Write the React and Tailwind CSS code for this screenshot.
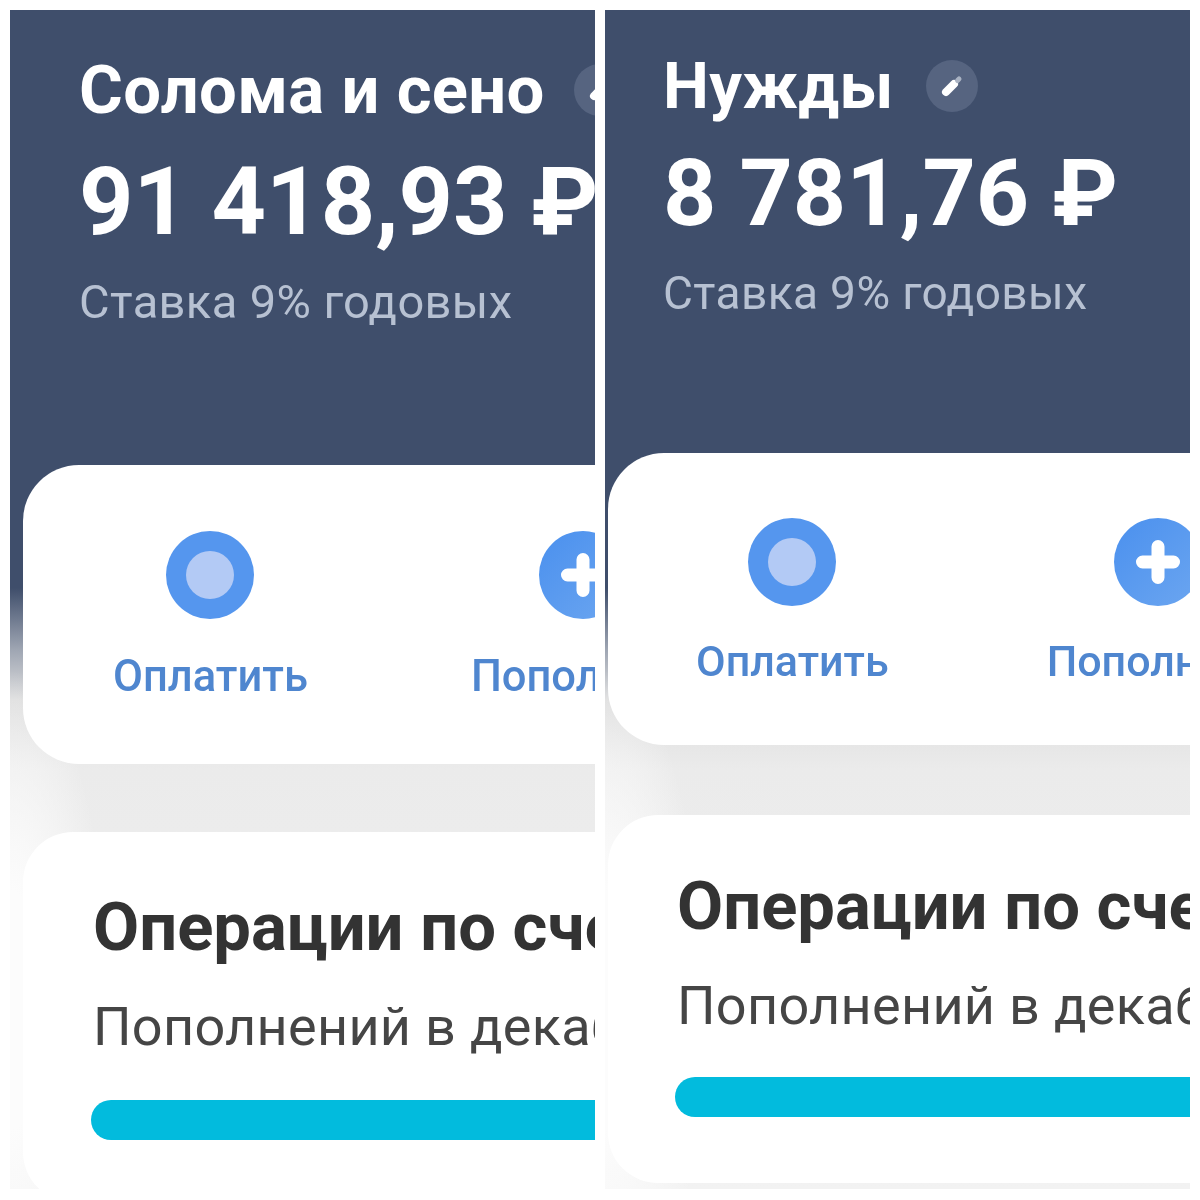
const roboto = { fontFamily: 'Roboto, "Noto Sans", sans-serif' };

const PencilBadge = ({ className }) => (
  <span className={`flex h-[52px] w-[52px] shrink-0 items-center justify-center rounded-full bg-[#566480] ${className}`}>
    <svg width="28" height="28" viewBox="0 0 28 28" fill="none" strokeLinecap="round">
      <path d="M8 20 16 12" stroke="#ffffff" strokeWidth="8" />
      <path d="M19.5 8.5 21 7" stroke="#aab3c3" strokeWidth="5" />
    </svg>
  </span>
);

const PayIcon = () => (
  <span className="flex h-[88px] w-[88px] items-center justify-center rounded-full bg-[#5596ee]">
    <span className="h-12 w-12 rounded-full bg-[#b3caf5]" />
  </span>
);

const PlusIcon = () => (
  <span className="flex h-[88px] w-[88px] items-center justify-center rounded-full bg-linear-to-br from-[#4a90ee] to-[#6ca6f0]">
    <svg width="48" height="48" viewBox="0 0 48 48" fill="none" stroke="#ffffff" strokeWidth="13" strokeLinecap="round">
      <path d="M24 8.5v31M8.5 24h31" />
    </svg>
  </span>
);

const Action = ({ icon, text, className = '', labelClass }) => (
  <div className={`flex flex-col items-center ${className}`}>
    {icon}
    <span className={`leading-[50px] font-medium text-[#4f86cf] ${labelClass}`}>{text}</span>
  </div>
);

const Panel = ({ title, amount, titleClass, pencilClass, headerClass, amountClass, rateClass, card1Class, pay, topUp, card2Class, monthClass, barClass }) => (
  <section
    className="flex h-[1179px] w-[585px] shrink-0 flex-col overflow-hidden whitespace-nowrap blur-[0.6px] bg-[radial-gradient(100px_340px_at_0_1000px,#fcfcfc_35%,#fcfcfc00_100%),linear-gradient(to_bottom,#3f4e6b_0,#3f4e6b_578px,#9fa6b3_640px,#dedede_690px,#ebebeb_760px,#f2f2f2_100%)]"
    style={roboto}
  >
    <div className={`shrink-0 ${headerClass}`}>
      <div className="flex items-center">
        <h1 className={`leading-[68px] font-bold tracking-[0.3px] text-white ${titleClass}`}>{title}</h1>
        <PencilBadge className={pencilClass} />
      </div>
      <p className={`leading-[108px] font-bold text-white ${amountClass}`}>{amount}</p>
      <p className={`leading-[50px] tracking-[0.4px] text-[#b7c1d2] ${rateClass}`}>Ставка 9% годовых</p>
    </div>

    <div className={`flex w-[700px] shrink-0 items-start rounded-[56px] bg-white ${card1Class}`}>
      {pay}
      {topUp}
    </div>

    <div className={`w-[700px] shrink-0 rounded-[50px] bg-white ${card2Class}`}>
      <h2 className="text-[67px] leading-[74px] font-bold text-[#333333]">Операции по счету</h2>
      <p className={`text-[54px] leading-[60px] tracking-[0.3px] text-[#454545] ${monthClass}`}>Пополнений в декабре</p>
      <div className={`-ml-[2px] h-10 w-[700px] rounded-full bg-[#02bbdd] ${barClass}`} />
    </div>
  </section>
);

export default function App() {
  return (
    <div className="flex h-[1200px] w-[1200px] gap-[10px] bg-white py-[10px] pl-[10px]">
      <Panel
        title="Солома и сено"
        amount="91 418,93 ₽"
        titleClass="text-[67px]"
        headerClass="h-[455px] pt-[46px] pl-[69px]"
        pencilClass="ml-[29px]"
        amountClass="mt-[24px] text-[95px]"
        rateClass="mt-[21px] text-[47px]"
        card1Class="ml-[13px] h-[299px] pt-[66px] pl-[90px]"
        pay={<Action icon={<PayIcon />} text="Оплатить" labelClass="mt-[33px] text-[43.5px]" />}
        topUp={<Action icon={<PlusIcon />} text="Пополнить" className="ml-[163px]" labelClass="mt-[33px] text-[43.5px]" />}
        card2Class="mt-[68px] ml-[13px] h-[370px] pt-[58px] pl-[70px]"
        monthClass="mt-[33px]"
        barClass="mt-[43px]"
      />
      <Panel
        title="Нужды"
        amount="8 781,76 ₽"
        titleClass="text-[65px]"
        headerClass="h-[443px] pt-[42px] pl-[58px]"
        pencilClass="ml-[32px]"
        amountClass="mt-[20px] text-[93px]"
        rateClass="mt-[20px] text-[46px]"
        card1Class="ml-[3px] h-[292px] pt-[65px] pl-[88px]"
        pay={<Action icon={<PayIcon />} text="Оплатить" labelClass="mt-[30px] text-[43px]" />}
        topUp={<Action icon={<PlusIcon />} text="Пополнить" className="ml-[158px]" labelClass="mt-[30px] text-[43px]" />}
        card2Class="mt-[70px] ml-[3px] h-[368px] pt-[54px] pl-[69px]"
        monthClass="mt-[33px]"
        barClass="mt-[41px]"
      />
    </div>
  );
}
